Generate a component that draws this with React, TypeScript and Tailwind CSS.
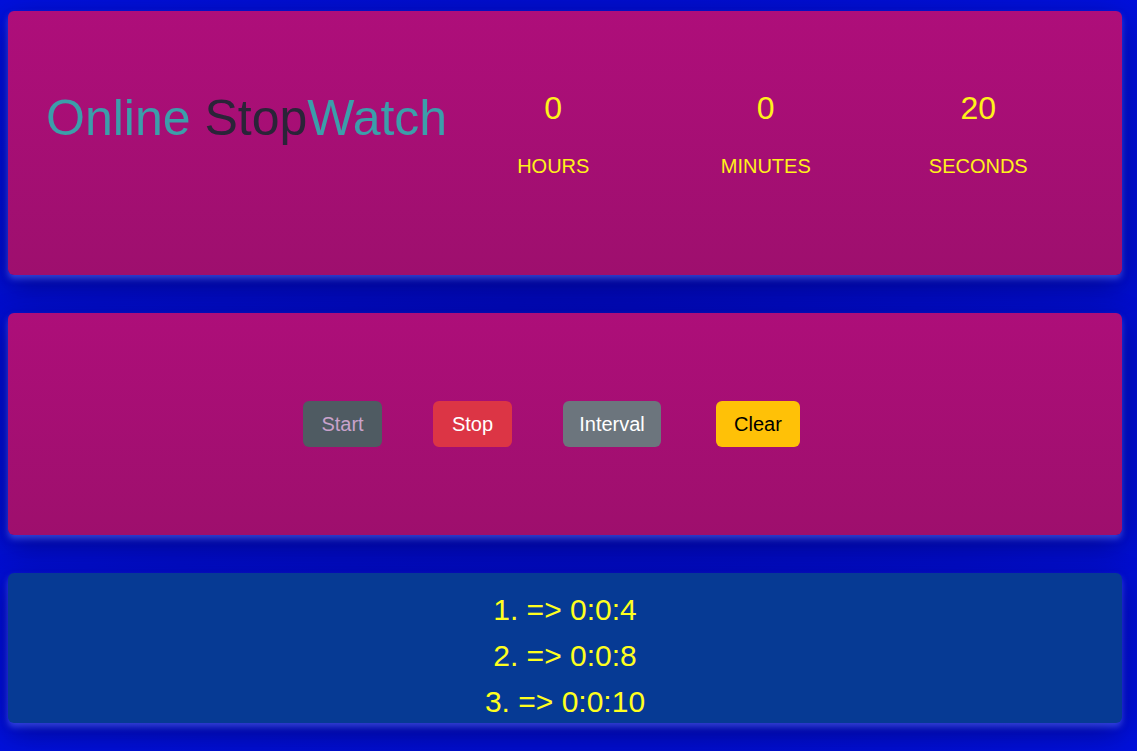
import { FunctionComponent } from "react";

const units = [
  { value: "0", label: "HOURS" },
  { value: "0", label: "MINUTES" },
  { value: "20", label: "SECONDS" },
];

const laps = ["0:0:4", "0:0:8", "0:0:10"];

const card =
  "rounded-[6px] shadow-[0_4px_6px_rgba(90,110,255,0.55),0_10px_30px_rgba(0,0,60,0.45)]";

const App: FunctionComponent = () => {
  return (
    <div className="w-full min-h-[751px] bg-[#0010dc] bg-[radial-gradient(ellipse_at_center,#0008b4_0%,#000cc8_60%,#0010dc_100%)] pt-[11px] pl-2 pr-[15px] pb-[28px] font-['Liberation_Sans',Arial,sans-serif]">
      <section
        className={`${card} h-[264px] bg-gradient-to-b from-[#ae0e7a] to-[#9e0f6e] flex flex-row items-center`}
      >
        <h1 className="w-[439px] shrink-0 whitespace-nowrap pl-[38px] pb-[50px] text-[50px] leading-none text-[#3c9eaa]">
          Online <span className="text-[#2a2438]">Stop</span>Watch
        </h1>
        <div className="flex flex-row pb-[18px]">
          {units.map((u) => (
            <div key={u.label} className="w-[212.5px] flex flex-col items-center text-[#fff21a]">
              <div className="text-[32px] leading-none">{u.value}</div>
              <div className="mt-[32px] text-[20px] leading-none">{u.label}</div>
            </div>
          ))}
        </div>
      </section>

      <section
        className={`${card} mt-[38px] h-[222px] bg-gradient-to-b from-[#ad0e79] to-[#9e0f6d] flex flex-row items-center pl-[295px]`}
      >
        <button className="h-[46px] w-[79px] rounded-[6px] bg-[#4f5b62] text-[20px] text-[#c9a2cb]">
          Start
        </button>
        <button className="ml-[51px] h-[46px] w-[79px] rounded-[6px] bg-[#dc3545] text-[20px] text-white">
          Stop
        </button>
        <button className="ml-[51px] h-[46px] w-[98px] rounded-[6px] bg-[#6c757d] text-[20px] text-white">
          Interval
        </button>
        <button className="ml-[55px] h-[46px] w-[84px] rounded-[6px] bg-[#ffc107] text-[20px] text-black">
          Clear
        </button>
      </section>

      <section
        className={`${card} mt-[38px] h-[150px] bg-[#063a94] flex flex-col items-center pt-[14px]`}
      >
        {laps.map((t, i) => (
          <div key={t} className="h-[46px] leading-[46px] text-[30px] text-[#ffff1e]">
            {i + 1}. =&gt; {t}
          </div>
        ))}
      </section>
    </div>
  );
};

export default App;
